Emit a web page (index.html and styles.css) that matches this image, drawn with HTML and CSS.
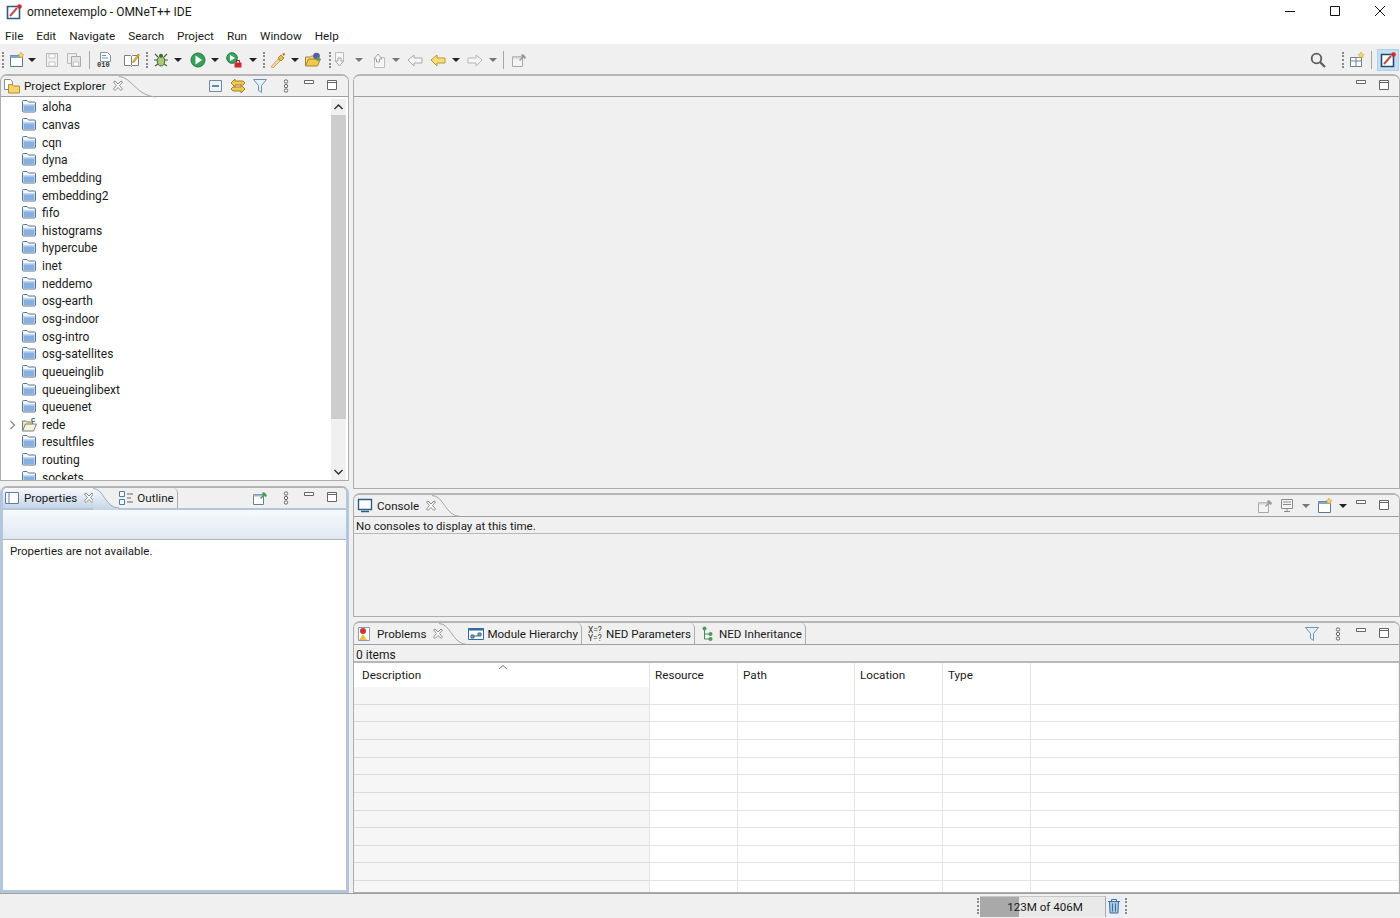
FILE: index.html
```html
<!DOCTYPE html>
<html lang="en">
<head>
  <meta charset="UTF-8" />
  <title>omnetexemplo - OMNeT++ IDE</title>
  <link rel="stylesheet" href="styles.css">
</head>
<body>

  <!-- shared icons -->
  <svg class="defs" width="0" height="0">
    <defs>
      <linearGradient id="tab-blue" gradientUnits="userSpaceOnUse" x1="0" y1="0" x2="0" y2="22">
        <stop offset="0" stop-color="#f7f9fb"/>
        <stop offset="1" stop-color="#c5d5e7"/>
      </linearGradient>
    </defs>
    <symbol id="folder" viewBox="0 0 16 16">
      <path d="M1.500 4V2.500q0-1 1-1h3.500l1.500 1.500h6q1 0 1 1V12q0 1-1 1h-11q-1 0-1-1z" fill="#f3f6fa" stroke="#5a7590"/>
      <path d="M2.500 5h11v7h-11z" fill="#86b0e2"/>
      <path d="M2.500 5h11v1.500h-11z" fill="#c3d8f0"/>
    </symbol>
    <symbol id="close" viewBox="0 0 12 12">
      <path d="M1.500 2 3 1l3 3 3-3 1.500 1-3 3.500 3 3.500-1.500 1.500-3-3-3 3-1.500-1.500 3-3.500z" fill="#fff" stroke="#8a8a8a"/>
    </symbol>
    <symbol id="min" viewBox="0 0 12 8">
      <path d="M1.500 1.500h9v3h-9z" fill="#fff" stroke="#666"/>
    </symbol>
    <symbol id="max" viewBox="0 0 12 12">
      <path d="M1.500 1.500h9v9h-9z" fill="#fff" stroke="#666"/>
      <path d="M1.500 3.500h9" stroke="#666"/>
    </symbol>
    <symbol id="menu" viewBox="0 0 6 14">
      <g fill="#fff" stroke="#666"><circle cx="3" cy="2.500" r="1.700"/><circle cx="3" cy="7" r="1.700"/><circle cx="3" cy="11.500" r="1.700"/></g>
    </symbol>
    <symbol id="funnel" viewBox="0 0 16 16">
      <path d="M1.500 1.500h13l-5 6v7l-3-2v-5z" fill="#e4f0f8" stroke="#6d93aa"/>
    </symbol>
    <symbol id="pin" viewBox="0 0 16 16">
      <path d="M1.500 4.500h10v10h-10z" fill="#fff" stroke="#6a7f93"/>
      <path d="M1.500 4.500h10v2h-10z" fill="#9db9d4"/>
      <path d="M8 8l3-3-1-2 2-1 3 3-1 2-2-1-3 3z" fill="#4e9a4e"/>
    </symbol>
    <symbol id="pin-off" viewBox="0 0 16 16">
      <path d="M1.500 4.500h10v10h-10z" fill="#f4f4f4" stroke="#a9a9a9"/>
      <path d="M1.500 4.500h10v2h-10z" fill="#cfcfcf"/>
      <path d="M8 8l3-3-1-2 2-1 3 3-1 2-2-1-3 3z" fill="#9a9a9a"/>
    </symbol>
    <symbol id="new-win" viewBox="0 0 16 16">
      <path d="M1.500 3.500h12v11h-12z" fill="#fff" stroke="#58799a"/>
      <path d="M1.500 3.500h12v2.500h-12z" fill="#7ea6cf"/>
      <path d="M12 0l1 2 2 .5-1.500 1.500.5 2-2-1-2 1 .5-2L9 2.500l2-.5z" fill="#f5d76e" stroke="#c49a2a" stroke-width=".5"/>
    </symbol>
  </svg>

  <div class="titlebar">
    <svg class="app-icon" width="16" height="16" viewBox="0 0 16 16">
      <path d="M1.500 2.500h12v12h-12z" fill="#fff" stroke="#2d5a80" stroke-width="1.600"/>
      <path d="M4 12l7-8" stroke="#c0504d" stroke-width="2"/>
      <circle cx="13.500" cy="2.500" r="2.300" fill="#d8262c"/>
    </svg>
    <span>omnetexemplo - OMNeT++ IDE</span>
    <div class="win-buttons">
      <svg width="12" height="12" viewBox="0 0 12 12"><path d="M1 6.500h10" stroke="#111"/></svg>
      <svg width="12" height="12" viewBox="0 0 12 12"><path d="M1.500 1.500h9v9h-9z" fill="none" stroke="#111"/></svg>
      <svg width="12" height="12" viewBox="0 0 12 12"><path d="M1 1l10 10M11 1 1 11" stroke="#111"/></svg>
    </div>
  </div>

  <div class="menubar">
    <span>File</span><span>Edit</span><span>Navigate</span><span>Search</span><span>Project</span><span>Run</span><span>Window</span><span>Help</span>
  </div>

  <div class="toolbar">
    <i class="dots"></i>
    <svg class="ic m6"><use href="#new-win"/></svg>
    <i class="arrow m3"></i>
    <svg class="ic m8" viewBox="0 0 16 16"><path d="M2.500 1.500h11v13h-11z" fill="#f2f2f2" stroke="#b5b5b5"/><path d="M5 2h6v4H5zM5 10h6v4H5z" fill="#fff" stroke="#c5c5c5"/></svg>
    <svg class="ic m6" viewBox="0 0 16 16"><path d="M1.500 1.500h9v10h-9z" fill="#eee" stroke="#bbb"/><path d="M5.500 4.500h9v10h-9z" fill="#e4e4e4" stroke="#aaa"/><path d="M7.500 10h5v4h-5z" fill="#fff" stroke="#c5c5c5"/></svg>
    <i class="sep m7"></i>
    <svg class="ic m7" viewBox="0 0 16 16"><path d="M3.500 .5h7l3 3v6h-10z" fill="#fff" stroke="#7d93a8"/><path d="M5 3.500h4M5 6h6" stroke="#7d93a8"/><text x="0" y="15" class="bin-text">010</text></svg>
    <svg class="ic m11" viewBox="0 0 16 16"><path d="M.5 3.500h6l1 1 1-1h6v10h-6l-1 1-1-1h-6z" fill="#fff" stroke="#7c7c7c"/><path d="M7.500 4.500v9" stroke="#7c7c7c"/><path d="M9 9l5-7 1.500 1-5 7-2 .5z" fill="#e4b83a" stroke="#8a6a10" stroke-width=".5"/></svg>
    <i class="dots m6"></i>
    <svg class="ic m6" viewBox="0 0 16 16"><path d="M2 2l3 3M14 2l-3 3M1 8h3M12 8h3M2 14l3-2M14 14l-3-2" stroke="#47633f" stroke-width="1.200"/><ellipse cx="8" cy="9" rx="3.800" ry="5" fill="#a9c97c" stroke="#3e6b2c"/><circle cx="8" cy="3.800" r="2" fill="#3e6b2c"/></svg>
    <i class="arrow m5"></i>
    <svg class="ic m8" viewBox="0 0 16 16"><circle cx="8" cy="8" r="7" fill="#36a05c" stroke="#1f7a42"/><path d="M5.500 3.500 12 8l-6.500 4.500z" fill="#fff"/></svg>
    <i class="arrow m5"></i>
    <svg class="ic m7" viewBox="0 0 16 16"><circle cx="6" cy="6" r="5.300" fill="#3fa565" stroke="#20733f"/><path d="M4 3l5 3-5 3z" fill="#fff"/><path d="M8.500 10.500h7v5h-7z" fill="#cc2a2a"/><path d="M10.500 10.500v-2h3v2" fill="none" stroke="#8c1c1c"/></svg>
    <i class="arrow m7"></i>
    <i class="dots m6"></i>
    <svg class="ic m6" viewBox="0 0 16 16"><path d="M1 15l7-8 2 2-7 7z" fill="#f3d9a0" stroke="#c9a868"/><path d="M8 6l3-3 3 3-3 3z" fill="#e9b949" stroke="#b58a24"/><path d="M12 2l2-1 1 1-1 2z" fill="#b5651d"/></svg>
    <i class="arrow m5"></i>
    <svg class="ic m6" viewBox="0 0 16 16"><path d="M.5 14V5h5l1-1h6v3" fill="#f5d98a" stroke="#a7862d"/><path d="M.5 14l3-7h12l-3 7z" fill="#f2c94c" stroke="#a7862d"/><circle cx="11.500" cy="4" r="3.300" fill="#5f5aa2"/><circle cx="13" cy="7" r="2" fill="#4da167"/></svg>
    <i class="dots m8"></i>
    <svg class="ic m3" viewBox="0 0 16 16"><path d="M2.500 .5h8v9h-8z" fill="#f6f6f6" stroke="#bdbdbd"/><path d="M5 9V6h3v3h2.500l-4 5-4-5z" fill="#f6f6f6" stroke="#a5a5a5"/></svg>
    <i class="arrow off m6"></i>
    <svg class="ic m8" viewBox="0 0 16 16"><path d="M3.500 5.500h10v10h-10z" fill="#f6f6f6" stroke="#bdbdbd"/><path d="M5.500 7V10h3V7H11L7 2 3 7z" fill="#f6f6f6" stroke="#a5a5a5"/></svg>
    <i class="arrow off m5"></i>
    <svg class="ic m7" viewBox="0 0 16 16"><path d="M1 8l6-5v3h8v5H7v3z" fill="#f6f6f6" stroke="#a9a9a9"/></svg>
    <svg class="ic m7" viewBox="0 0 16 16"><path d="M1 8l6-5v3h8v5H7v3z" fill="#f7dd7e" stroke="#bd9a2c"/></svg>
    <i class="arrow m6"></i>
    <svg class="ic m7" viewBox="0 0 16 16"><path d="M15 8 9 3v3H1v5h8v3z" fill="#f6f6f6" stroke="#b5b5b5"/></svg>
    <i class="arrow off m6"></i>
    <i class="sep m6"></i>
    <svg class="ic m7"><use href="#pin-off"/></svg>

    <div class="toolbar-right">
      <svg class="ic" viewBox="0 0 16 16"><circle cx="6.500" cy="6.500" r="4.800" fill="none" stroke="#5c5c5c" stroke-width="1.800"/><path d="M10 10l5 5" stroke="#5c5c5c" stroke-width="2.200"/></svg>
      <i class="dots m16"></i>
      <svg class="ic m6" viewBox="0 0 16 16"><path d="M1.500 5.500h11v9h-11zM1.500 9h11M7 5.500v9" fill="#fff" stroke="#6e7f90"/><path d="M12 0l1 2 2 .5-1.500 1.500.5 2-2-1-2 1 .5-2L9 2.500l2-.5z" fill="#f5d76e" stroke="#c49a2a" stroke-width=".5"/></svg>
      <i class="sep m6"></i>
      <div class="perspective">
        <svg class="ic" viewBox="0 0 16 16"><path d="M1.500 2.500h12v12h-12z" fill="#fff" stroke="#234e70" stroke-width="1.600"/><path d="M4 12l7-8" stroke="#c0504d" stroke-width="2"/><circle cx="13.500" cy="2.500" r="2.300" fill="#d8262c"/></svg>
      </div>
    </div>
  </div>

  <div class="workbench">
    <!-- left column -->
    <div class="col col-left">
      <section class="pane explorer">
        <div class="pane-head">
          <div class="tab selected">
            <svg class="ic" viewBox="0 0 16 16"><path d="M.5 1.500h6l2 2v8h-8z" fill="#fff" stroke="#8c8c8c"/><path d="M4.500 6.500h4l1 1.500h6v7h-11z" fill="#f5d272" stroke="#b8912c"/></svg>
            <span>Project Explorer</span>
            <svg class="close"><use href="#close"/></svg>
            <svg class="curve" width="38" height="22" viewBox="0 0 38 22"><path d="M0 .5C12 .5 18 20.500 37 21" fill="none" stroke="#a6a6a6"/></svg>
          </div>
          <div class="head-tools">
            <svg class="ic" viewBox="0 0 16 16"><path d="M1.500 2.500h12v11h-12z" fill="#eef3f8" stroke="#6a8aa8"/><path d="M4 8h7" stroke="#3e6283" stroke-width="1.500"/></svg>
            <svg class="ic tool-gap" viewBox="0 0 16 16"><path d="M1 5l4-4v2h8l2 2-2 2H5v2z" fill="#f2c94c" stroke="#a5812a"/><path d="M15 11l-4 4v-2H3l-2-2 2-2h8V7z" fill="#f2c94c" stroke="#a5812a"/></svg>
            <svg class="ic tool-gap"><use href="#funnel"/></svg>
            <svg class="menu-dots"><use href="#menu"/></svg>
            <svg class="min-btn"><use href="#min"/></svg>
            <svg class="max-btn"><use href="#max"/></svg>
          </div>
        </div>
        <div class="tree-wrap">
          <ul class="tree">
            <li><svg class="ic"><use href="#folder"/></svg>aloha</li>
            <li><svg class="ic"><use href="#folder"/></svg>canvas</li>
            <li><svg class="ic"><use href="#folder"/></svg>cqn</li>
            <li><svg class="ic"><use href="#folder"/></svg>dyna</li>
            <li><svg class="ic"><use href="#folder"/></svg>embedding</li>
            <li><svg class="ic"><use href="#folder"/></svg>embedding2</li>
            <li><svg class="ic"><use href="#folder"/></svg>fifo</li>
            <li><svg class="ic"><use href="#folder"/></svg>histograms</li>
            <li><svg class="ic"><use href="#folder"/></svg>hypercube</li>
            <li><svg class="ic"><use href="#folder"/></svg>inet</li>
            <li><svg class="ic"><use href="#folder"/></svg>neddemo</li>
            <li><svg class="ic"><use href="#folder"/></svg>osg-earth</li>
            <li><svg class="ic"><use href="#folder"/></svg>osg-indoor</li>
            <li><svg class="ic"><use href="#folder"/></svg>osg-intro</li>
            <li><svg class="ic"><use href="#folder"/></svg>osg-satellites</li>
            <li><svg class="ic"><use href="#folder"/></svg>queueinglib</li>
            <li><svg class="ic"><use href="#folder"/></svg>queueinglibext</li>
            <li><svg class="ic"><use href="#folder"/></svg>queuenet</li>
            <li class="open">
              <svg class="twisty" width="8" height="10" viewBox="0 0 8 10"><path d="M1.500 1l4 4-4 4" fill="none" stroke="#8a8a8a" stroke-width="1.300"/></svg>
              <svg class="ic" viewBox="0 0 16 16"><path d="M1.500 13V4h4l1 1h5v2" fill="#f7e6b0" stroke="#6a7f93"/><path d="M1.500 14l3-7h11l-3 7z" fill="#fdf3cf" stroke="#6a7f93"/><text x="10" y="5" class="c-mark">C</text></svg>
              rede
            </li>
            <li><svg class="ic"><use href="#folder"/></svg>resultfiles</li>
            <li><svg class="ic"><use href="#folder"/></svg>routing</li>
            <li><svg class="ic"><use href="#folder"/></svg>sockets</li>
          </ul>
          <div class="scrollbar">
            <svg class="sb-arrow" width="15" height="16" viewBox="0 0 15 16"><path d="M3.500 10l4-4 4 4" fill="none" stroke="#333" stroke-width="1.500"/></svg>
            <div class="sb-track"><div class="sb-thumb"></div></div>
            <svg class="sb-arrow" width="15" height="16" viewBox="0 0 15 16"><path d="M3.500 6l4 4 4-4" fill="none" stroke="#333" stroke-width="1.500"/></svg>
          </div>
        </div>
      </section>

      <section class="pane properties">
        <div class="pane-head">
          <div class="tab selected">
            <svg class="ic" viewBox="0 0 16 16"><path d="M1.500 2.500h13v11h-13z" fill="#fff" stroke="#5e7f9e"/><path d="M5 2.500v11" stroke="#5e7f9e"/></svg>
            <span>Properties</span>
            <svg class="close"><use href="#close"/></svg>
            <svg class="curve" width="26" height="22" viewBox="0 0 26 22"><path d="M0 22h26v-2C12 20 11 .5 0 .5z" fill="url(#tab-blue)"/><path d="M0 .5C11 .5 12 20 26 20" fill="none" stroke="#9aa9ba"/></svg>
          </div>
          <div class="tab plain">
            <svg class="ic" viewBox="0 0 16 16"><path d="M1.500 1.500h5v5h-5zM1.500 9.500h5v5h-5z" fill="#fff" stroke="#4d7ea8"/><path d="M9 4h6M9 12h6M9 8h4" stroke="#666"/></svg>
            <span>Outline</span>
          </div>
          <div class="head-tools">
            <svg class="ic"><use href="#pin"/></svg>
            <svg class="menu-dots"><use href="#menu"/></svg>
            <svg class="min-btn"><use href="#min"/></svg>
            <svg class="max-btn"><use href="#max"/></svg>
          </div>
        </div>
        <div class="props-strip"></div>
        <p class="props-msg">Properties are not available.</p>
      </section>
    </div>

    <!-- right column -->
    <div class="col col-right">
      <section class="pane editor">
        <div class="pane-head">
          <div class="head-tools">
            <svg class="min-btn"><use href="#min"/></svg>
            <svg class="max-btn"><use href="#max"/></svg>
          </div>
        </div>
      </section>

      <section class="pane console">
        <div class="pane-head">
          <div class="tab selected">
            <svg class="ic" viewBox="0 0 16 16"><path d="M1.500 1.500h13v10h-13z" fill="#fff" stroke="#2f5c85" stroke-width="1.400"/><path d="M4 13.500h8" stroke="#2f5c85" stroke-width="1.500"/></svg>
            <span>Console</span>
            <svg class="close"><use href="#close"/></svg>
            <svg class="curve" width="28" height="22" viewBox="0 0 28 22"><path d="M0 .5C12 .5 13 21 28 21.500" fill="none" stroke="#a6a6a6"/></svg>
          </div>
          <div class="head-tools">
            <svg class="ic"><use href="#pin-off"/></svg>
            <svg class="ic tool-gap" viewBox="0 0 16 16"><path d="M1.500 1.500h11v9h-11z" fill="#f4f4f4" stroke="#8c8c8c"/><path d="M3 4h8M3 6.500h8M4 13.500h6M7 10.500v3" stroke="#8c8c8c"/></svg>
            <i class="arrow off tool-arrow"></i>
            <svg class="ic tool-gap"><use href="#new-win"/></svg>
            <i class="arrow tool-arrow"></i>
            <svg class="min-btn"><use href="#min"/></svg>
            <svg class="max-btn"><use href="#max"/></svg>
          </div>
        </div>
        <p class="info">No consoles to display at this time.</p>
      </section>

      <section class="pane problems">
        <div class="pane-head">
          <div class="tab selected">
            <svg class="ic" viewBox="0 0 16 16"><path d="M1.500 1.500h11v13h-11z" fill="#fff" stroke="#8a9cb0"/><circle cx="6" cy="5" r="3" fill="#d13232"/><path d="M2 14l4-6 4 6z" fill="#f0c040"/></svg>
            <span>Problems</span>
            <svg class="close"><use href="#close"/></svg>
            <svg class="curve" width="28" height="22" viewBox="0 0 28 22"><path d="M0 .5C12 .5 13 21 28 21.500" fill="none" stroke="#a6a6a6"/></svg>
          </div>
          <div class="tab plain">
            <svg class="ic" viewBox="0 0 16 16"><path d="M.5 2.500h15v11H.5z" fill="#fff" stroke="#2f6aa3"/><path d="M.5 2.500h15v2H.5z" fill="#2f6aa3"/><path d="M3 9h3v3H3zM10 7h3v3h-3zM6 10h4" fill="#7d9db8" stroke="#476d8d"/></svg>
            <span>Module Hierarchy</span>
          </div>
          <div class="tab plain">
            <span class="ned-mark">X=?<br>Y=?</span>
            <span>NED Parameters</span>
          </div>
          <div class="tab plain">
            <svg class="ic" viewBox="0 0 16 16"><path d="M4.500 3v10h6M4.500 8h6" fill="none" stroke="#4d8a5a"/><circle cx="4.500" cy="2.500" r="2" fill="#4d9a5a"/><circle cx="10.500" cy="8" r="2" fill="#4d9a5a"/><circle cx="10.500" cy="13" r="2" fill="#4d9a5a"/></svg>
            <span>NED Inheritance</span>
          </div>
          <div class="head-tools">
            <svg class="ic"><use href="#funnel"/></svg>
            <svg class="menu-dots"><use href="#menu"/></svg>
            <svg class="min-btn"><use href="#min"/></svg>
            <svg class="max-btn"><use href="#max"/></svg>
          </div>
        </div>
        <div class="info items">0 items</div>
        <div class="table">
          <div class="thead">
            <div class="col-desc">Description<svg class="sort" width="10" height="6" viewBox="0 0 10 6"><path d="M1 5l4-3.500L9 5" fill="none" stroke="#777"/></svg></div>
            <div class="col-res">Resource</div>
            <div class="col-path">Path</div>
            <div class="col-loc">Location</div>
            <div class="col-type">Type</div>
            <div class="col-rest"></div>
          </div>
          <div class="tbody">
            <div class="col-desc shade"></div>
            <div class="col-res"></div>
            <div class="col-path"></div>
            <div class="col-loc"></div>
            <div class="col-type"></div>
            <div class="col-rest"></div>
          </div>
        </div>
      </section>
    </div>
  </div>

  <div class="statusbar">
    <i class="dots"></i>
    <div class="heap"><div class="heap-used"></div><span>123M of 406M</span></div>
    <div class="trash">
      <svg class="ic" viewBox="0 0 16 16"><path d="M2 3.500h12M5.500 3V1.500h5V3" fill="none" stroke="#3e6f9e"/><path d="M3.500 3.500h9l-.5 11.500H4z" fill="#a9c6e2" stroke="#3e6f9e"/><path d="M6.500 5.500v8M9.500 5.500v8" stroke="#3e6f9e"/></svg>
    </div>
    <i class="dots"></i>
  </div>

</body>
</html>
```

FILE: styles.css
```css
* {
  box-sizing: border-box;
}

html, body {
  height: 100%;
}

body {
  margin: 0;
  height: 918px;
  overflow: hidden;
  display: flex;
  flex-direction: column;
  background: #f0f0f0;
  color: #1a1a1a;
  font-family: Roboto, "Liberation Sans", sans-serif;
  font-size: 12px;
}

.defs {
  position: absolute;
}

svg {
  display: block;
  flex-shrink: 0;
}

.ic {
  width: 16px;
  height: 16px;
}

/* TITLE + MENU */
.titlebar {
  height: 24px;
  background: #fff;
  display: flex;
  align-items: center;
  padding-left: 6px;
  gap: 5px;
}

.win-buttons {
  margin-left: auto;
  display: flex;
  gap: 33px;
  padding: 0 14px 2px 0;
}

.menubar {
  height: 20px;
  background: #fff;
  display: flex;
  align-items: center;
  gap: 13px;
  padding: 3px 0 0 5px;
  font-size: 11.7px;
}

/* TOOLBAR */
.toolbar {
  height: 30px;
  padding: 2px 0 0 2px;
  display: flex;
  align-items: center;
}

.toolbar-right {
  margin-left: auto;
  display: flex;
  align-items: center;
  padding-right: 1px;
}

.perspective {
  margin-left: 5px;
  width: 22px;
  height: 22px;
  background: #c5dff3;
  border: 1px solid #b0cfe8;
  display: flex;
  align-items: center;
  justify-content: center;
}

.dots {
  display: block;
  width: 2px;
  height: 16px;
  margin-right: -1px;
  border-left: 2px dotted #8a8a8a;
}

.sep {
  display: block;
  width: 1px;
  height: 18px;
  background: #a8a8a8;
}

.arrow {
  display: block;
  width: 0;
  box-sizing: content-box;
  border: 4px solid transparent;
  border-top-color: #222;
  border-bottom-width: 0;
}

.arrow.off {
  border-top-color: #777;
}

.m3 { margin-left: 3px; }
.m5 { margin-left: 5px; }
.m6 { margin-left: 6px; }
.m7 { margin-left: 7px; }
.m8 { margin-left: 8px; }
.m11 { margin-left: 11px; }
.m16 { margin-left: 16px; }

.bin-text {
  font-family: "Liberation Mono", monospace;
  font-size: 7px;
  font-weight: bold;
  fill: #333;
}

.c-mark {
  font-family: "Liberation Sans", sans-serif;
  font-size: 6px;
  font-weight: bold;
  fill: #333;
}

/* WORKBENCH */
.workbench {
  height: 819px;
  display: flex;
  gap: 4px;
}

.col {
  display: flex;
  flex-direction: column;
}

.col-left {
  width: 349px;
  gap: 5px;
}

.col-right {
  flex: 1;
  gap: 4px;
  min-width: 0;
}

.pane {
  border: 1px solid #adadad;
  border-top: 2px solid #b5b5b5;
  border-radius: 7px 7px 0 0;
  display: flex;
  flex-direction: column;
  overflow: hidden;
  background: #f0f0f0;
}

.explorer { height: 407px; }
.editor { height: 415px; }
.console { height: 124px; }
.problems { height: 272px; }

.properties {
  height: 407px;
  background: #fff;
  border: 3px solid #b4c6dc;
  border-top: 2px solid #b5b5b5;
}

.pane-head {
  height: 21px;
  flex-shrink: 0;
  display: flex;
  align-items: center;
  border-bottom: 1px solid #9f9f9f;
  background: #f0f0f0;
}

.console .pane-head,
.problems .pane-head {
  height: 22px;
}

.tab {
  height: 100%;
  display: flex;
  align-items: center;
  gap: 4px;
  padding: 0 2px 0 3px;
  position: relative;
  font-size: 11.6px;
}

.tab.selected {
  margin-right: 19px;
  padding-right: 0;
}

.tab.plain {
  gap: 3px;
  border-right: 1px solid #adadad;
  border-radius: 0 5px 0 0;
  padding: 0 3px 0 5px;
}

.close {
  width: 12px;
  height: 12px;
  margin-left: 2px;
}

.curve {
  position: absolute;
  left: calc(100% - 5px);
  top: 0;
}

.head-tools {
  margin-left: auto;
  display: flex;
  align-items: center;
  padding-right: 9px;
}

.explorer .head-tools {
  padding-right: 10px;
}

.tool-gap {
  margin-left: 6px;
}

.tool-arrow {
  margin-left: 6px;
}

.console .tool-gap {
  margin-left: 7px;
}

.console .min-btn {
  margin-left: 8px;
}

.menu-dots {
  width: 6px;
  height: 14px;
  margin-left: 15px;
}

.min-btn {
  width: 12px;
  height: 8px;
  margin-left: 14px;
  margin-bottom: 6px;
}

.max-btn {
  width: 12px;
  height: 12px;
  margin-left: 11px;
  margin-bottom: 2px;
}

/* TREE */
.tree-wrap {
  flex: 1;
  min-height: 0;
  display: flex;
  background: #fff;
  padding-top: 1.5px;
}

.tree {
  flex: 1;
  list-style: none;
  margin: 0;
  padding: 0;
  overflow: hidden;
}

.tree li {
  height: 17.65px;
  display: flex;
  align-items: center;
  gap: 5px;
  padding-left: 20px;
  white-space: nowrap;
}

.tree li.open {
  padding-left: 8px;
}

.tree li.open .twisty {
  margin-right: -1px;
}

.scrollbar {
  width: 15px;
  margin-right: 2px;
  display: flex;
  flex-direction: column;
  background: #f0f0f0;
}

.sb-arrow {
  flex-shrink: 0;
}

.sb-track {
  flex: 1;
}

.sb-thumb {
  height: 304px;
  background: #cdcdcd;
}

/* PROPERTIES */
.properties .pane-head {
  border-bottom: 2px solid #b4c6dc;
  height: 22px;
}

.properties .tab.selected {
  background: linear-gradient(#f7f9fb, #c5d5e7);
  padding-left: 1px;
  margin-right: 18px;
}

.properties .curve {
  left: calc(100% - 2px);
}

.properties .head-tools {
  padding-right: 8px;
}

.props-strip {
  height: 30px;
  flex-shrink: 0;
  background: linear-gradient(#f7fafd, #dfe8f2);
  border-bottom: 1px solid #b2b2b2;
}

.props-msg {
  margin: 3px 0 0;
  padding-left: 7px;
  line-height: 16px;
  font-size: 11.5px;
}

/* CONSOLE + PROBLEMS */
.info {
  margin: 0;
  padding-left: 2px;
  height: 17px;
  line-height: 18px;
  border-bottom: 1px solid #b8b8b8;
  flex-shrink: 0;
  font-size: 11.55px;
}

.items {
  height: 18px;
  line-height: 20px;
  border-bottom-width: 2px;
  font-size: 12px;
}

.ned-mark {
  width: 16px;
  font-size: 8.500px;
  line-height: 8px;
  color: #333;
  text-align: center;
}

.table {
  flex: 1;
  min-height: 0;
  background: #fff;
  margin-right: 1px;
  display: flex;
  flex-direction: column;
  font-size: 11.7px;
}

.thead,
.tbody {
  display: grid;
  grid-template-columns: 296px 88px 117px 88px 88px 1fr;
}

.thead {
  height: 24px;
  line-height: 24px;
}

.thead > div {
  padding-left: 5px;
  border-right: 1px solid #e4e4e4;
  position: relative;
}

.thead > .col-desc {
  padding-left: 8px;
}

.thead > .col-rest {
  border-right: 0;
}

.sort {
  position: absolute;
  left: 144px;
  top: 1px;
}

.tbody {
  flex: 1;
  background-image: repeating-linear-gradient(transparent 0, transparent 16.65px, #e4e4e4 16.65px, #e4e4e4 17.65px);
}

.tbody > div {
  border-right: 1px solid #e4e4e4;
}

.tbody > .col-rest {
  border-right: 0;
}

.tbody > .shade {
  background: rgba(0, 0, 0, 0.035);
}

/* STATUS BAR */
.statusbar {
  height: 25px;
  border-top: 1px solid #a0a0a0;
  display: flex;
  align-items: center;
  justify-content: flex-end;
  padding-right: 274px;
}

.heap {
  position: relative;
  width: 126px;
  height: 21px;
  margin-left: 2px;
  padding-left: 5px;
  font-size: 11.6px;
  background: #e9e9e9;
  border-top: 1px solid #c8c8c8;
  border-right: 1px solid #a8a8a8;
  display: flex;
  align-items: center;
  justify-content: center;
}

.heap-used {
  position: absolute;
  left: 0;
  top: 0;
  bottom: 0;
  width: 39px;
  background: #a9a9a9;
}

.heap span {
  position: relative;
}

.trash {
  width: 17px;
  height: 21px;
  padding-right: 2px;
  background: #e9eff5;
  display: flex;
  align-items: center;
  justify-content: center;
  margin-right: 2px;
}
```
